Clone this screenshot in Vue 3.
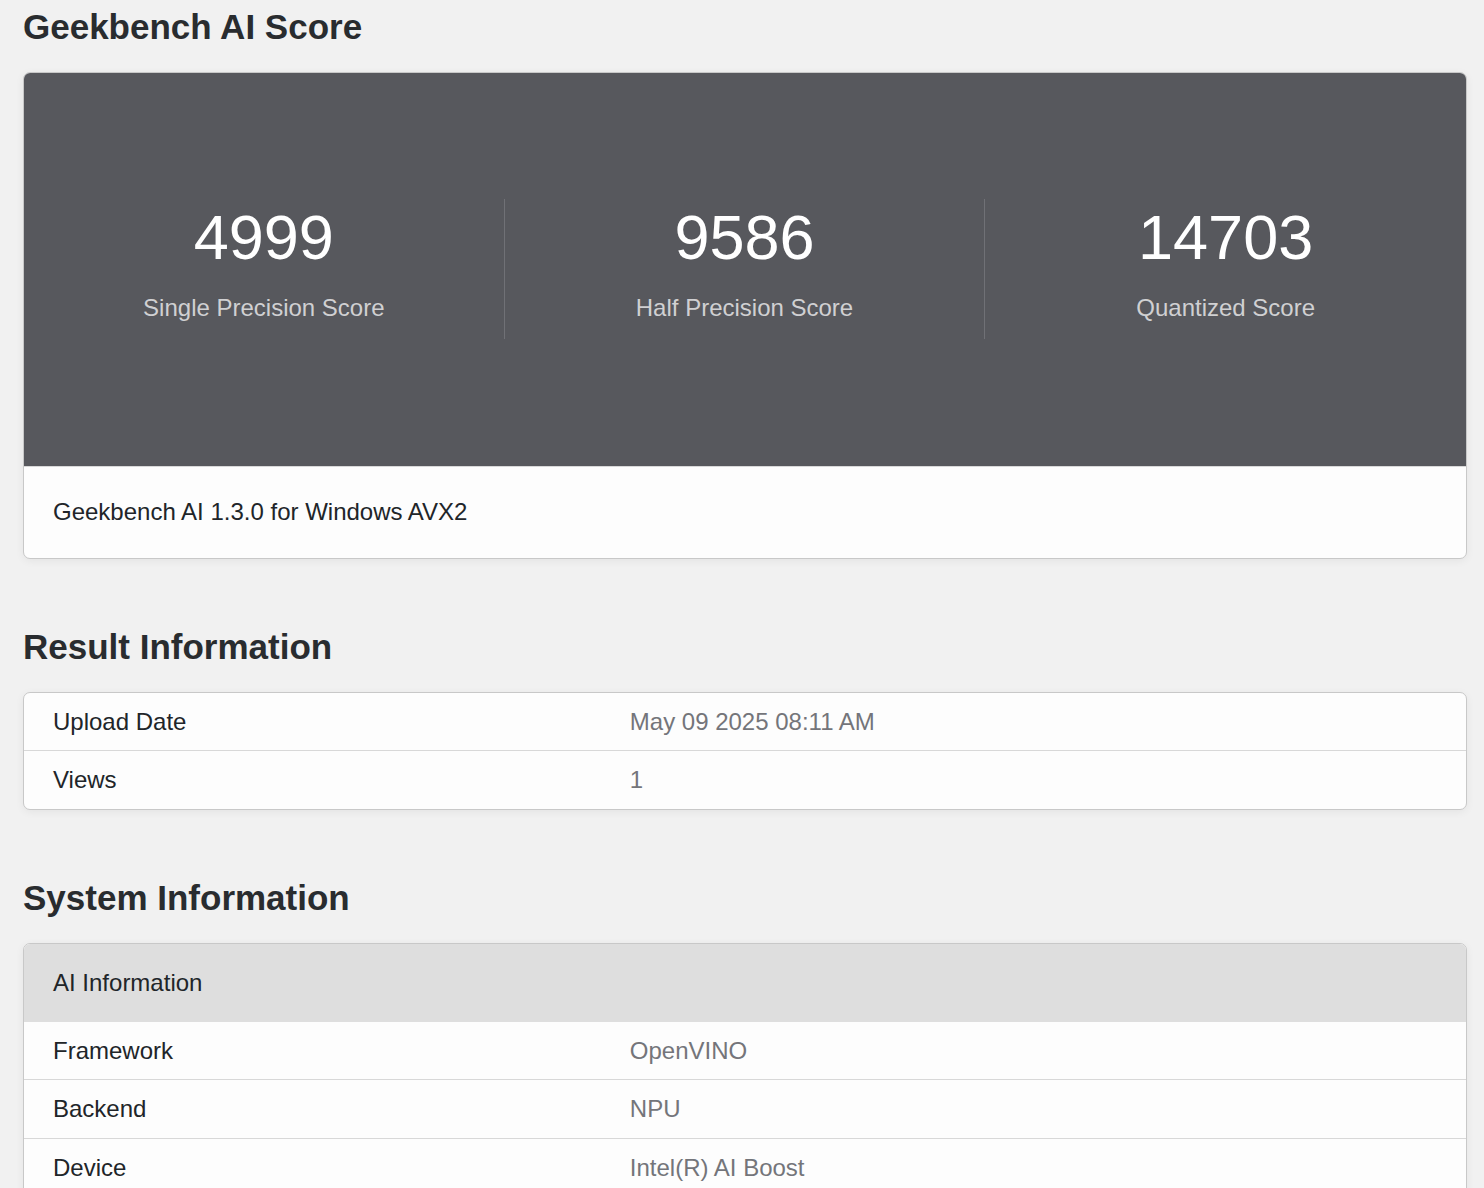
<script setup>
const scores = [
  { value: '4999', label: 'Single Precision Score' },
  { value: '9586', label: 'Half Precision Score' },
  { value: '14703', label: 'Quantized Score' },
]
const resultRows = [
  ['Upload Date', 'May 09 2025 08:11 AM'],
  ['Views', '1'],
]
const aiRows = [
  ['Framework', 'OpenVINO'],
  ['Backend', 'NPU'],
  ['Device', 'Intel(R) AI Boost'],
]
</script>

<template>
  <main class="page">
    <section class="section">
      <h2 class="heading">Geekbench AI Score</h2>
      <div class="card">
        <div class="scores">
          <div v-for="s in scores" :key="s.label" class="score">
            <div class="value">{{ s.value }}</div>
            <div class="label">{{ s.label }}</div>
          </div>
        </div>
        <div class="platform">Geekbench AI 1.3.0 for Windows AVX2</div>
      </div>
    </section>

    <section class="section">
      <h2 class="heading">Result Information</h2>
      <div class="card">
        <table class="info">
          <colgroup>
            <col class="name-col" />
            <col />
          </colgroup>
          <tbody>
            <tr v-for="[name, value] in resultRows" :key="name">
              <th scope="row">{{ name }}</th>
              <td>{{ value }}</td>
            </tr>
          </tbody>
        </table>
      </div>
    </section>

    <section class="section">
      <h2 class="heading">System Information</h2>
      <div class="card">
        <table class="info">
          <colgroup>
            <col class="name-col" />
            <col />
          </colgroup>
          <thead>
            <tr>
              <th colspan="2" scope="colgroup">AI Information</th>
            </tr>
          </thead>
          <tbody>
            <tr v-for="[name, value] in aiRows" :key="name">
              <th scope="row">{{ name }}</th>
              <td>{{ value }}</td>
            </tr>
          </tbody>
        </table>
      </div>
    </section>
  </main>
</template>

<style>
body {
  background: #f1f1f1;
  overflow: hidden;
  height: 100vh;
}
</style>

<style scoped>
.page {
  padding: 5px 17px 0 23px;
  font-family: "Liberation Sans", Arial, sans-serif;
  font-size: 24px;
  line-height: 38px;
  color: #212529;
}
.section {
  margin-bottom: 66px;
}
.section:last-child {
  margin-bottom: 0;
}
.heading {
  margin: 0 0 23px;
  font-size: 35px;
  line-height: 44px;
  font-weight: 700;
  color: #292c2f;
}
.card {
  border: 1px solid #c8c8c8;
  border-radius: 7px;
  background: #fdfdfd;
  overflow: hidden;
  box-shadow: 0 2px 8px rgba(0, 0, 0, 0.06);
}
.scores {
  display: grid;
  grid-template-columns: repeat(3, 1fr);
  padding: 126px 0 127px;
  background: #57585d;
  text-align: center;
}
.score:not(:last-child) {
  border-right: 1px solid #707176;
}
.value {
  height: 90px;
  font-size: 63px;
  line-height: 76px;
  color: #fff;
}
.label {
  height: 50px;
  color: #d0d0d2;
}
.platform {
  padding: 26px 29px 27px;
  border-top: 1px solid #d8d8d8;
}
.info {
  width: 100%;
  table-layout: fixed;
  border-collapse: separate;
  border-spacing: 0;
}
.name-col {
  width: 40%;
}
.info th,
.info td {
  padding: 10px 29px 9px;
  text-align: left;
  font-weight: 400;
}
.info td {
  color: #74757a;
}
.info thead th {
  padding: 20px 29px;
  background: #dedede;
}
.info tbody tr + tr > * {
  padding-bottom: 10px;
  border-top: 1px solid #d8d8d8;
}
</style>
